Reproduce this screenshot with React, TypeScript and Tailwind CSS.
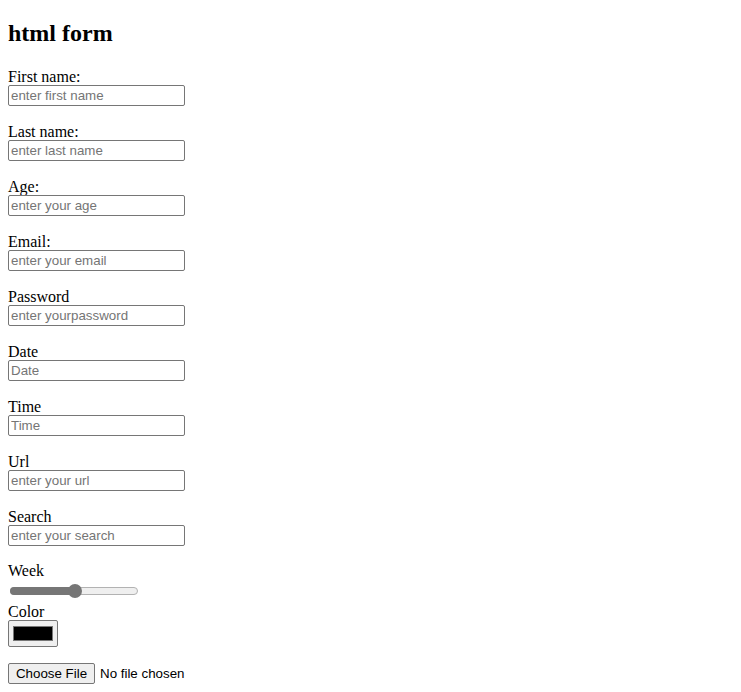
import React from "react";

const fields: { label: string; placeholder: string }[] = [
  { label: "First name:", placeholder: "enter first name" },
  { label: "Last name:", placeholder: "enter last name" },
  { label: "Age:", placeholder: "enter your age" },
  { label: "Email:", placeholder: "enter your email" },
  { label: "Password", placeholder: "enter yourpassword" },
  { label: "Date", placeholder: "Date" },
  { label: "Time", placeholder: "Time" },
  { label: "Url", placeholder: "enter your url" },
  { label: "Search", placeholder: "enter your search" },
];

export default function App() {
  return (
    <div className="min-h-[692px] bg-white pl-[8px] pt-[19px] text-black font-['Liberation_Serif','Times_New_Roman',serif] text-[16px]">
      <h2 className="h-[28px] text-[24px] font-bold leading-[28px] mb-[19px]">html form</h2>
      <div className="flex flex-col">
        {fields.map((f) => (
          <div key={f.label} className="flex flex-col mb-[15px]">
            <div className="h-[19px] leading-[22px]">{f.label}</div>
            <input
              readOnly
              placeholder={f.placeholder}
              className="w-[177px] h-[21px] border border-[#767676] rounded-[2px] px-[2px] text-[13.33px] font-['Liberation_Sans',Arial,sans-serif] placeholder:text-[#757575] outline-none"
            />
          </div>
        ))}
        <div className="h-[19px] leading-[20px]">Week</div>
        <div className="h-[21px] flex items-center pl-[2px]">
          <div className="relative w-[128px] h-[8px]">
            <div className="absolute inset-0 rounded-full bg-[#efefef] border border-[#b2b2b2]" />
            <div className="absolute left-0 top-0 h-[8px] w-[66px] rounded-l-full bg-[#767676]" />
            <div className="absolute left-[58px] top-[-3px] w-[14px] h-[14px] rounded-full bg-[#767676]" />
          </div>
        </div>
        <div className="h-[19px] leading-[22px]">Color</div>
        <div className="w-[50px] h-[27px] border border-[#767676] rounded-[2px] bg-[#efefef] flex items-center justify-center">
          <div className="w-[40px] h-[15px] bg-black border border-[#777777]" />
        </div>
        <div className="mt-[16px] flex items-center h-[21px]">
          <div className="h-[21px] w-[87px] border border-[#767676] rounded-[2px] bg-[#efefef] flex items-center justify-center text-[13.33px] font-['Liberation_Sans',Arial,sans-serif]">
            Choose File
          </div>
          <span className="ml-[5px] text-[13.33px] font-['Liberation_Sans',Arial,sans-serif]">No file chosen</span>
        </div>
      </div>
    </div>
  );
}
